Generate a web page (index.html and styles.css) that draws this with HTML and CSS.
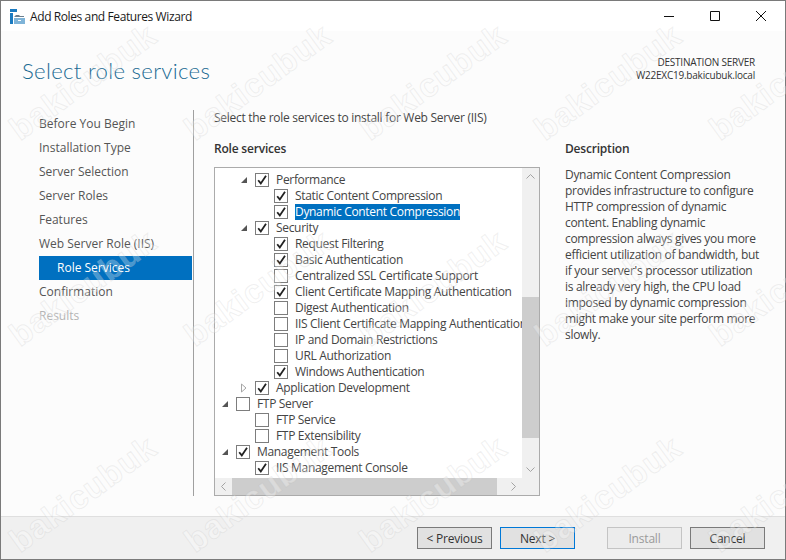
FILE: index.html
```html
<!DOCTYPE html>
<html lang="en">
<head>
<meta charset="utf-8">
<title>Add Roles and Features Wizard</title>
<link rel="stylesheet" href="styles.css">
</head>
<body>
<svg class="defs" width="0" height="0">
  <symbol id="tick" viewBox="0 0 12 12"><path d="M2.2 6.2 L4.8 9.4 L10 1.8" fill="none" stroke="#222" stroke-width="1.8"/></symbol>
  <symbol id="open" viewBox="0 0 8 8"><path d="M7 1 V7 H1 Z" fill="#555"/></symbol>
  <symbol id="closed" viewBox="0 0 8 10"><path d="M1.5 1 L6 5 L1.5 9 Z" fill="#fff" stroke="#a6a6a6"/></symbol>
</svg>
<div class="window">
  <header class="titlebar">
    <svg class="appicon" width="15" height="15" viewBox="0 0 15 15">
      <path d="M0 0H7V3H0Z" fill="#1a7ac0"/>
      <path d="M0 4H3V15H0Z" fill="#1a7ac0"/>
      <path d="M4 8 L6 6H9L10 7H14V8H4Z" fill="#6b7f8f"/>
      <path d="M4 9H15V15H4Z" fill="#7fb4d8"/>
      <path d="M8 11H11V12H8Z" fill="#fff"/>
    </svg>
    <span class="apptitle">Add Roles and Features Wizard</span>
    <div class="winctl">
      <svg width="12" height="12" viewBox="0 0 12 12"><path d="M1 6.5H11" stroke="#111" stroke-width="1"/></svg>
      <svg width="12" height="12" viewBox="0 0 12 12"><path d="M1.5 1.5H10.5V10.5H1.5Z" fill="none" stroke="#111"/></svg>
      <svg width="12" height="12" viewBox="0 0 12 12"><path d="M1 1L11 11M11 1L1 11" stroke="#111" stroke-width="1"/></svg>
    </div>
  </header>
  <div class="pagehead">
    <h1>Select role services</h1>
    <div class="dest">DESTINATION SERVER<br>W22EXC19.bakicubuk.local</div>
  </div>
  <main class="content">
    <nav class="steps">
      <div class="step">Before You Begin</div>
      <div class="step">Installation Type</div>
      <div class="step">Server Selection</div>
      <div class="step">Server Roles</div>
      <div class="step">Features</div>
      <div class="step">Web Server Role (IIS)</div>
      <div class="step sub">Role Services</div>
      <div class="step">Confirmation</div>
      <div class="step off">Results</div>
    </nav>
    <section class="pane">
      <p class="intro">Select the role services to install for Web Server (IIS)</p>
      <div class="columns">
        <div class="services">
          <h2>Role services</h2>
          <div class="listbox">
            <div class="tree">
              <div class="row l1"><svg class="arrow"><use href="#open"/></svg><span class="box"><svg class="tk"><use href="#tick"/></svg></span><span class="lab">Performance</span></div>
              <div class="row l2"><span class="box"><svg class="tk"><use href="#tick"/></svg></span><span class="lab">Static Content Compression</span></div>
              <div class="row l2"><span class="box"><svg class="tk"><use href="#tick"/></svg></span><span class="lab sel">Dynamic Content Compression</span></div>
              <div class="row l1"><svg class="arrow"><use href="#open"/></svg><span class="box"><svg class="tk"><use href="#tick"/></svg></span><span class="lab">Security</span></div>
              <div class="row l2"><span class="box"><svg class="tk"><use href="#tick"/></svg></span><span class="lab">Request Filtering</span></div>
              <div class="row l2"><span class="box"><svg class="tk"><use href="#tick"/></svg></span><span class="lab">Basic Authentication</span></div>
              <div class="row l2"><span class="box"></span><span class="lab">Centralized SSL Certificate Support</span></div>
              <div class="row l2"><span class="box"><svg class="tk"><use href="#tick"/></svg></span><span class="lab">Client Certificate Mapping Authentication</span></div>
              <div class="row l2"><span class="box"></span><span class="lab">Digest Authentication</span></div>
              <div class="row l2"><span class="box"></span><span class="lab">IIS Client Certificate Mapping Authentication</span></div>
              <div class="row l2"><span class="box"></span><span class="lab">IP and Domain Restrictions</span></div>
              <div class="row l2"><span class="box"></span><span class="lab">URL Authorization</span></div>
              <div class="row l2"><span class="box"><svg class="tk"><use href="#tick"/></svg></span><span class="lab">Windows Authentication</span></div>
              <div class="row l1"><svg class="arrow closed"><use href="#closed"/></svg><span class="box"><svg class="tk"><use href="#tick"/></svg></span><span class="lab">Application Development</span></div>
              <div class="row l0"><svg class="arrow"><use href="#open"/></svg><span class="box"></span><span class="lab">FTP Server</span></div>
              <div class="row l1"><span class="box"></span><span class="lab">FTP Service</span></div>
              <div class="row l1"><span class="box"></span><span class="lab">FTP Extensibility</span></div>
              <div class="row l0"><svg class="arrow"><use href="#open"/></svg><span class="box"><svg class="tk"><use href="#tick"/></svg></span><span class="lab">Management Tools</span></div>
              <div class="row l1"><span class="box"><svg class="tk"><use href="#tick"/></svg></span><span class="lab">IIS Management Console</span></div>
            </div>
            <div class="vbar">
              <svg class="sb" viewBox="0 0 17 17"><path d="M4.5 10.5L8.5 6.5L12.5 10.5" fill="none" stroke="#a3a3a3"/></svg>
              <div class="vthumb"></div>
              <svg class="sb sb-end" viewBox="0 0 17 17"><path d="M4.5 6.5L8.5 10.5L12.5 6.5" fill="none" stroke="#a3a3a3"/></svg>
            </div>
            <div class="hbar">
              <svg class="sb" viewBox="0 0 17 17"><path d="M10.5 4.5L6.5 8.5L10.5 12.5" fill="none" stroke="#a3a3a3"/></svg>
              <div class="hthumb"></div>
              <svg class="sb sb-end" viewBox="0 0 17 17"><path d="M6.5 4.5L10.5 8.5L6.5 12.5" fill="none" stroke="#a3a3a3"/></svg>
            </div>
            <div class="corner"></div>
          </div>
        </div>
        <aside class="desc">
          <h2>Description</h2>
          <p>Dynamic Content Compression provides infrastructure to configure HTTP compression of dynamic content. Enabling dynamic compression always gives you more efficient utilization of bandwidth, but if your server's processor utilization is already very high, the CPU load imposed by dynamic compression might make your site perform more slowly.</p>
        </aside>
      </div>
    </section>
  </main>
  <footer class="footer">
    <button class="btn">&lt; Previous</button>
    <button class="btn focus">Next &gt;</button>
    <button class="btn dis gap">Install</button>
    <button class="btn">Cancel</button>
  </footer>
</div>
<div class="marks" aria-hidden="true">
  <div class="markgrid">
    <span>bakicubuk</span><span>bakicubuk</span><span>bakicubuk</span><span>bakicubuk</span><span>bakicubuk</span>
    <span>bakicubuk</span><span>bakicubuk</span><span>bakicubuk</span><span>bakicubuk</span><span>bakicubuk</span>
    <span>bakicubuk</span><span>bakicubuk</span><span>bakicubuk</span><span>bakicubuk</span><span>bakicubuk</span>
  </div>
</div>
</body>
</html>
```

FILE: styles.css
```css
* { box-sizing: border-box; }
html, body { margin: 0; height: 100%; }
html { overflow: hidden; }
body {
  position: relative;
  width: 786px;
  height: 560px;
  overflow: hidden;
  font-family: "Open Sans", "Noto Sans", sans-serif;
  font-size: 12px;
  color: #444;
  background: #fff;
}
.defs { position: absolute; }
.window {
  width: 786px;
  height: 560px;
  display: flex;
  flex-direction: column;
  border: 1px solid #7a7a7a;
  background: #fcfcfc;
}
.titlebar {
  height: 30px;
  flex: none;
  display: flex;
  align-items: center;
  padding-left: 9px;
  background: #fff;
}
.appicon { margin-right: 5px; }
.apptitle { font-size: 12px; color: #1a1a1a; letter-spacing: -0.4px; }
.winctl {
  margin-left: auto;
  display: flex;
  gap: 34px;
  padding-right: 18px;
  margin-top: -1px;
}
.pagehead {
  height: 79px;
  flex: none;
  display: flex;
  justify-content: space-between;
  padding: 23px 30px 0 21px;
}
h1 {
  margin: 0;
  font-family: "Lato", "Open Sans", sans-serif;
  font-weight: 300;
  font-size: 22.2px;
  line-height: 33px;
  color: #1b6b93;
  letter-spacing: 0.3px;
}
.dest {
  text-align: right;
  font-size: 10px;
  line-height: 13px;
  color: #333;
  padding-top: 2px;
  letter-spacing: -0.22px;
}
.content {
  flex: 1;
  display: flex;
  min-height: 0;
  padding-bottom: 20px;
}
.steps {
  width: 193px;
  flex: none;
  padding: 2px 1px 0 38px;
  border-right: 1px solid #a0a0a0;
}
.step {
  height: 24px;
  line-height: 24px;
  color: #555;
}
.sub {
  background: #0070c0;
  color: #fff;
  padding-left: 18px;
}
.off { color: #b4b4b4; }
.pane {
  flex: 1;
  padding-left: 20px;
  min-width: 0;
  display: flex;
  flex-direction: column;
}
.intro {
  margin: 0;
  height: 31px;
  line-height: 16px;
  color: #444;
  letter-spacing: -0.28px;
}
.columns {
  flex: 1;
  display: flex;
  min-height: 0;
}
.services { width: 326px; flex: none; display: flex; flex-direction: column; }
h2 {
  margin: 0;
  font-size: 12px;
  font-weight: 600;
  line-height: 16px;
  color: #333;
  letter-spacing: -0.2px;
}
.services h2 { height: 26px; flex: none; }
.listbox {
  flex: 1;
  min-height: 0;
  display: grid;
  grid-template-columns: 1fr 17px;
  grid-template-rows: 1fr 17px;
  border: 1px solid #ababab;
  background: #fff;
}
.tree {
  overflow: hidden;
  padding-top: 4px;
  white-space: nowrap;
  min-width: 0;
  min-height: 0;
}
.row {
  height: 16px;
  display: flex;
  align-items: center;
  color: #444;
  position: relative;
}
.l0 { padding-left: 21px; }
.l1 { padding-left: 40px; }
.l2 { padding-left: 59px; }
.arrow {
  position: absolute;
  width: 8px;
  height: 8px;
  top: 4px;
  margin-left: -15px;
}
.arrow.closed { height: 10px; top: 3px; }
.box {
  width: 14px;
  height: 14px;
  flex: none;
  border: 1px solid #7d7d7d;
  background: #fff;
  display: flex;
  align-items: center;
  justify-content: center;
}
.tk { width: 12px; height: 12px; }
.lab {
  margin-left: 7px;
  letter-spacing: -0.32px;
  line-height: 16px;
}
.sel { background: #0070c0; color: #fff; }
.vbar, .hbar { background: #f0f0f0; display: flex; }
.vbar { flex-direction: column; }
.sb { width: 17px; height: 17px; flex: none; }
.sb-end { margin-top: auto; }
.hbar .sb-end { margin-top: 0; margin-left: auto; }
.vthumb {
  width: 17px;
  height: 141px;
  margin-top: 112px;
  background: #cdcdcd;
}
.hthumb {
  width: 265px;
  height: 17px;
  background: #cdcdcd;
}
.corner { background: #f0f0f0; }
.desc { width: 197px; margin-left: 25px; flex: none; }
.desc h2 { height: 26px; }
.desc p {
  margin: 0;
  line-height: 16px;
  color: #444;
  letter-spacing: -0.3px;
}
.footer {
  height: 43px;
  flex: none;
  display: flex;
  align-items: flex-start;
  justify-content: flex-end;
  gap: 8px;
  padding: 10px 20px 0 0;
  background: #f0f0f0;
  border-top: 1px solid #dfdfdf;
}
.btn {
  width: 75px;
  height: 22px;
  padding: 0;
  border: 1px solid #7a7a7a;
  background: #e1e1e1;
  color: #333;
  font: inherit;
  letter-spacing: -0.2px;
}
.focus { border-color: #0078d7; }
.dis { border-color: #c4c4c4; background: #ececec; color: #9a9a9a; }
.gap { margin-left: 24px; }
.marks {
  position: absolute;
  inset: 0;
  overflow: hidden;
  pointer-events: none;
}
.markgrid {
  display: grid;
  grid-template-columns: repeat(5, 175px);
  grid-auto-rows: 206px;
  margin: -21px 0 0 -4px;
}
.marks span {
  justify-self: center;
  align-self: center;
  transform: rotate(-36deg);
  font-family: "Liberation Sans", sans-serif;
  font-weight: 700;
  font-size: 33px;
  line-height: 40px;
  letter-spacing: 1px;
  color: rgba(255, 255, 255, 0.3);
  -webkit-text-stroke: 1px rgba(180, 180, 180, 0.2);
}
```
